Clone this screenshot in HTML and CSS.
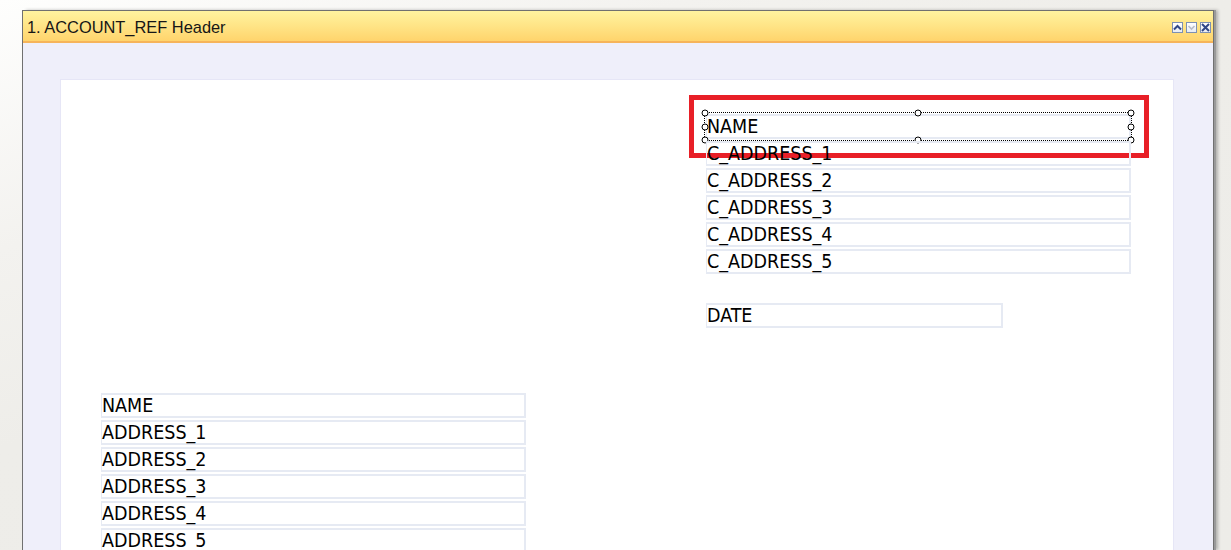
FILE: index.html
```html
<!DOCTYPE html>
<html lang="en">
<head>
<meta charset="UTF-8">
<title>ACCOUNT_REF Header</title>
<link rel="stylesheet" href="styles.css">
</head>
<body>
<div class="window">
    <div class="titlebar">
        <span class="title">1. ACCOUNT_REF Header</span>
        <div class="buttons">
            <span class="btn">
                <svg width="9" height="9" viewBox="0 0 9 9"><path d="M1 6.5 L4.5 3 L8 6.5" fill="none" stroke="#2f4787" stroke-width="2"/></svg>
            </span>
            <span class="btn">
                <svg width="9" height="9" viewBox="0 0 9 9"><path d="M1.5 3 L4.5 6 L7.5 3" fill="none" stroke="#b9bdc9" stroke-width="1.6"/></svg>
            </span>
            <span class="btn">
                <svg width="9" height="9" viewBox="0 0 9 9"><path d="M1 1 L8 8 M8 1 L1 8" fill="none" stroke="#2f4787" stroke-width="2"/></svg>
            </span>
        </div>
    </div>
    <div class="body">
        <div class="page">
            <div class="group group-right">
                <div class="field selected">NAME
                    <span class="highlight"></span>
                    <span class="selection">
                        <i class="handle h-tl"></i><i class="handle h-tc"></i><i class="handle h-tr"></i>
                        <i class="handle h-ml"></i><i class="handle h-mr"></i>
                        <i class="handle h-bl"></i><i class="handle h-bc"></i><i class="handle h-br"></i>
                    </span>
                </div>
                <div class="field">C_ADDRESS_1</div>
                <div class="field">C_ADDRESS_2</div>
                <div class="field">C_ADDRESS_3</div>
                <div class="field">C_ADDRESS_4</div>
                <div class="field">C_ADDRESS_5</div>
                <div class="field date">DATE</div>
            </div>
            <div class="group group-left">
                <div class="field">NAME</div>
                <div class="field">ADDRESS_1</div>
                <div class="field">ADDRESS_2</div>
                <div class="field">ADDRESS_3</div>
                <div class="field">ADDRESS_4</div>
                <div class="field">ADDRESS_5</div>
            </div>
        </div>
    </div>
</div>
</body>
</html>
```

FILE: styles.css
```css
html, body {
    height: 100%;
}
body {
    margin: 0;
    overflow: hidden;
    background: linear-gradient(160deg, #fefefd 0%, #f3f2ef 25%, #eeede9 45%, #edece8 100%);
}
.window {
    margin: 10px 0 0 22px;
    width: 1190px;
    border: 1px solid #707070;
    border-bottom: none;
    box-shadow: 2px 0 0 #9a9a9a, 4px 0 3px rgba(0, 0, 0, 0.25);
}
.titlebar {
    height: 30px;
    border-bottom: 2px solid #f6b45a;
    background: linear-gradient(#fff39f, #ffe486 50%, #ffd46c);
    display: flex;
    align-items: center;
    justify-content: space-between;
    padding: 0 2px 0 4px;
}
.title {
    font-family: "Liberation Sans", Arial, sans-serif;
    font-size: 16.4px;
    color: #161616;
    padding-top: 2px;
}
.buttons {
    display: flex;
    gap: 3px;
    align-self: flex-start;
    margin-top: 11px;
}
.btn {
    width: 11px;
    height: 11px;
    box-sizing: border-box;
    border: 1px solid #7d90b2;
    background: linear-gradient(#ffffff, #e8ecf4);
    display: flex;
    align-items: center;
    justify-content: center;
}
.btn svg {
    display: block;
}
.body {
    background: #efeffa;
    padding: 36px 39px 0 37px;
}
.page {
    height: 470px;
    background: #ffffff;
    border: 1px solid #e6e6f6;
    border-bottom: none;
    display: flex;
    flex-direction: column;
}
.group {
    display: flex;
    flex-direction: column;
    gap: 2px;
}
.group-right {
    margin: 34px 0 0 645px;
}
.group-left {
    margin: 65px 0 0 40px;
}
.field {
    position: relative;
    width: 425px;
    height: 25px;
    box-sizing: border-box;
    border: 2px solid #e6eaf3;
    border-left-width: 1px;
    padding-top: 1px;
    font-family: "DejaVu Sans Condensed", "DejaVu Sans", sans-serif;
    font-stretch: condensed;
    font-size: 19.5px;
    line-height: 19px;
    color: #000000;
    white-space: nowrap;
}
.field.date {
    width: 297px;
    margin-top: 27px;
}
.highlight {
    position: absolute;
    left: -18px;
    top: -21px;
    width: 460px;
    height: 63px;
    box-sizing: border-box;
    border: 5px solid #e81f27;
}
.selection {
    position: absolute;
    left: -3px;
    top: -4px;
    width: 428px;
    height: 29px;
    box-sizing: border-box;
    border: 1px dotted #000000;
}
.handle {
    position: absolute;
    width: 7px;
    height: 7px;
    box-sizing: border-box;
    border: 1px solid #000000;
    border-radius: 50%;
    background: #ffffff;
    transform: translate(-50%, -50%);
}
.h-tl { left: 0; top: 0; }
.h-tc { left: 50%; top: 0; }
.h-tr { left: 100%; top: 0; }
.h-ml { left: 0; top: 50%; }
.h-mr { left: 100%; top: 50%; }
.h-bl { left: 0; top: 100%; }
.h-bc { left: 50%; top: 100%; }
.h-br { left: 100%; top: 100%; }
```
